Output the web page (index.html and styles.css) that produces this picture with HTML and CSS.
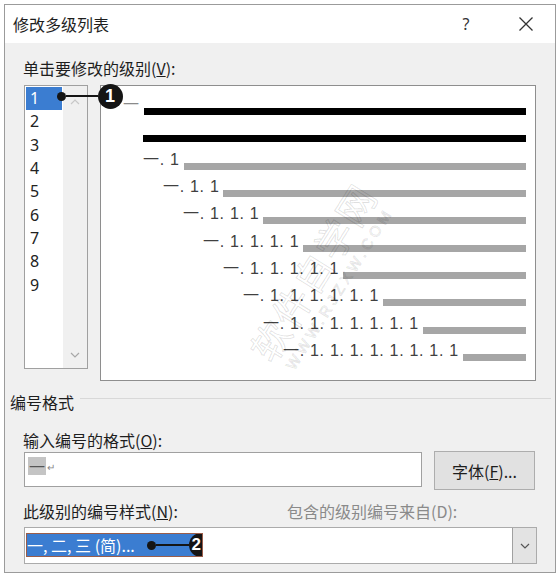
FILE: index.html
```html
<!DOCTYPE html>
<html lang="zh-CN">
<head>
    <meta charset="UTF-8">
    <title>修改多级列表</title>
    <link rel="stylesheet" href="styles.css">
</head>
<body>
    <div class="dialog">
        <div class="titlebar">
            <span class="title">修改多级列表</span>
            <span class="help">?</span>
            <svg class="close" width="14" height="14" viewBox="0 0 14 14">
                <path d="M0.5 0.5 L13.5 13.5 M13.5 0.5 L0.5 13.5" stroke="#333" stroke-width="1.3" fill="none"/>
            </svg>
        </div>

        <div class="content">
            <div class="label level-label">单击要修改的级别(<u>V</u>):</div>

            <div class="top-row">
                <div class="listbox">
                    <ul class="levels">
                        <li class="selected">1</li>
                        <li>2</li>
                        <li>3</li>
                        <li>4</li>
                        <li>5</li>
                        <li>6</li>
                        <li>7</li>
                        <li>8</li>
                        <li>9</li>
                    </ul>
                    <div class="scrollbar">
                        <svg width="10" height="6" viewBox="0 0 10 6"><path d="M1 5 L5 1 L9 5" stroke="#c8c8c8" stroke-width="1.2" fill="none"/></svg>
                        <svg width="10" height="6" viewBox="0 0 10 6"><path d="M1 1 L5 5 L9 1" stroke="#a8a8a8" stroke-width="1.2" fill="none"/></svg>
                    </div>
                </div>

                <div class="preview">
                    <div class="pv-row lv1"><span class="pv-num first">一</span><span class="pv-bar current"></span></div>
                    <div class="pv-row lv2"><span class="pv-bar current"></span></div>
                    <div class="pv-row lv2"><span class="pv-num">一. 1</span><span class="pv-bar"></span></div>
                    <div class="pv-row lv3"><span class="pv-num">一. 1. 1</span><span class="pv-bar"></span></div>
                    <div class="pv-row lv4"><span class="pv-num">一. 1. 1. 1</span><span class="pv-bar"></span></div>
                    <div class="pv-row lv5"><span class="pv-num">一. 1. 1. 1. 1</span><span class="pv-bar"></span></div>
                    <div class="pv-row lv6"><span class="pv-num">一. 1. 1. 1. 1. 1</span><span class="pv-bar"></span></div>
                    <div class="pv-row lv7"><span class="pv-num">一. 1. 1. 1. 1. 1. 1</span><span class="pv-bar"></span></div>
                    <div class="pv-row lv8"><span class="pv-num">一. 1. 1. 1. 1. 1. 1. 1</span><span class="pv-bar"></span></div>
                    <div class="pv-row lv9"><span class="pv-num">一. 1. 1. 1. 1. 1. 1. 1. 1</span><span class="pv-bar"></span></div>
                </div>
            </div>

            <div class="group">
                <span>编号格式</span>
                <span class="group-line"></span>
            </div>

            <div class="label format-label">输入编号的格式(<u>O</u>):</div>
            <div class="format-row">
                <div class="format-input"><span class="num-field">一</span><span class="para-mark">↵</span></div>
                <button class="font-btn">字体(<u>F</u>)...</button>
            </div>

            <div class="style-labels">
                <span class="style-label">此级别的编号样式(<u>N</u>):</span>
                <span class="style-label disabled">包含的级别编号来自(D):</span>
            </div>
            <div class="combo">
                <div class="combo-value">
                    一, 二, 三 (简)...
                    <div class="callout callout-two"><span class="dot"></span><span class="stem"></span><span class="badge">2</span></div>
                </div>
                <div class="combo-arrow">
                    <svg width="10" height="6" viewBox="0 0 10 6"><path d="M1 1 L5 5 L9 1" stroke="#555" stroke-width="1.2" fill="none"/></svg>
                </div>
            </div>
        </div>

        <!-- annotation over the level list -->
        <div class="callout callout-one"><span class="dot"></span><span class="stem"></span><span class="badge">1</span></div>

        <div class="watermark">
            <div class="wm-name">软件自学网</div>
            <div class="wm-url">WWW.RJZXW.COM</div>
        </div>
    </div>
</body>
</html>
```

FILE: styles.css
```css
* {
    box-sizing: border-box;
}

body {
    margin: 0;
    padding: 4px;
    background: #fff;
    font-family: "Noto Sans", "Noto Sans CJK SC", sans-serif;
    font-size: 16px;
    color: #1e1e1e;
}

.dialog {
    position: relative;
    width: 552px;
    border: 1px solid #9b9b9b;
    background: #f0f0f0;
    overflow: hidden;
}

.titlebar {
    height: 38px;
    background: #fff;
    display: flex;
    align-items: center;
    padding-left: 8px;
    padding-right: 22px;
}

.title {
    flex: 1;
    line-height: 20px;
    font-family: "Noto Sans CJK SC", sans-serif;
}

.help {
    width: 20px;
    text-align: center;
    line-height: 20px;
    color: #333;
    margin-right: 43px;
}

.label {
    line-height: 20px;
    font-family: "Noto Sans CJK SC", sans-serif;
}

.level-label {
    margin: 15px 0 0 18px;
}

.top-row {
    display: flex;
    gap: 12px;
    margin-top: 7px;
    padding-left: 19px;
}

.listbox {
    width: 64px;
    height: 284px;
    border: 1px solid #a0a0a0;
    background: #fff;
    display: flex;
}

.levels {
    list-style: none;
    margin: 0;
    padding: 1px;
    width: 38px;
}

.levels li {
    height: 23.33px;
    line-height: 23px;
    padding-left: 4px;
    color: #222;
}

.levels li.selected {
    background: #3b7dd1;
    color: #fff;
}

.scrollbar {
    flex: 1;
    background: #f0f0f0;
    display: flex;
    flex-direction: column;
    justify-content: space-between;
    align-items: center;
    padding: 13px 0 10px;
}

.preview {
    width: 436px;
    height: 296px;
    border: 1px solid #8e8e8e;
    background: #fff;
    padding: 1.67px 9px 0 0;
}

.pv-row {
    display: flex;
    align-items: flex-end;
    height: 27.33px;
}

.lv1 { padding-left: 22px; }
.lv2 { padding-left: 42px; }
.lv3 { padding-left: 62px; }
.lv4 { padding-left: 82px; }
.lv5 { padding-left: 102px; }
.lv6 { padding-left: 122px; }
.lv7 { padding-left: 142px; }
.lv8 { padding-left: 162px; }
.lv9 { padding-left: 182px; }

.pv-num {
    font-family: "Liberation Sans", "Noto Sans CJK SC", sans-serif;
    font-size: 16px;
    line-height: 20px;
    height: 20px;
    letter-spacing: 0.7px;
    color: #404040;
    white-space: nowrap;
    margin-right: 4px;
}

.pv-num.first {
    color: #8a8a8a;
}

.pv-bar {
    flex: 1;
    height: 7px;
    background: #a6a6a6;
}

.pv-bar.current {
    background: #000;
}

.group {
    display: flex;
    margin-top: 11px;
    padding: 0 4px 0 5px;
    line-height: 20px;
    font-family: "Noto Sans CJK SC", sans-serif;
}

.group-line {
    flex: 1;
    height: 1px;
    background: #d8d8d8;
    margin: 6px 0 0 6px;
}

.format-label {
    margin: 18px 0 0 18px;
}

.format-row {
    display: flex;
    align-items: flex-start;
    gap: 12px;
    margin-top: 1px;
    padding-left: 19px;
}

.format-input {
    width: 398px;
    height: 35px;
    margin-top: 1px;
    border: 1px solid #a0a0a0;
    background: #fff;
    padding: 4px 3px 0;
    display: flex;
    align-items: flex-start;
}

.num-field {
    background: #c4c4c4;
    color: #555;
    font-family: "Noto Sans CJK SC", sans-serif;
    line-height: 18px;
    height: 18px;
    padding: 0 1px;
}

.para-mark {
    font-size: 10px;
    line-height: 10px;
    color: #888;
    margin: 5px 0 0 1px;
}

.font-btn {
    width: 101px;
    height: 39px;
    background: #e1e1e1;
    border: 1px solid #adadad;
    font-family: "Noto Sans CJK SC", sans-serif;
    font-size: 16px;
    color: #1e1e1e;
    padding: 0;
}

.style-labels {
    display: flex;
    margin-top: 11px;
    padding-left: 18px;
    line-height: 20px;
    font-family: "Noto Sans CJK SC", sans-serif;
}

.style-label {
    width: 264px;
}

.style-label.disabled {
    color: #8a8a8a;
}

.combo {
    display: flex;
    width: 513px;
    height: 37px;
    margin: 6px 0 8px 19px;
    border: 1px solid #ababab;
    background: #fff;
}

.combo-value {
    position: relative;
    overflow: hidden;
    width: 177px;
    height: 24px;
    margin: 5px 0 0 1px;
    background: #3b7dd1;
    border: 1px solid #9a5d4a;
    color: #fff;
    font-family: "Noto Sans CJK SC", sans-serif;
    line-height: 22px;
    white-space: nowrap;
}

.combo-arrow {
    margin-left: auto;
    width: 24px;
    background: #e3e3e3;
    border-left: 1px solid #a0a0a0;
    display: flex;
    align-items: center;
    justify-content: center;
}

.callout {
    position: absolute;
    display: flex;
    align-items: center;
}

.callout .dot {
    width: 9px;
    height: 9px;
    border-radius: 50%;
    background: #151515;
}

.callout .stem {
    height: 2px;
    background: #151515;
}

.callout .badge {
    border-radius: 50%;
    background: #151515;
    color: #fff;
    font-family: "Liberation Sans", sans-serif;
    font-weight: bold;
    text-align: center;
}

.callout-one {
    left: 51.5px;
    top: 78.5px;
    height: 25px;
}

.callout-one .stem {
    width: 32px;
}

.callout-one .badge {
    width: 25px;
    height: 25px;
    line-height: 25px;
    font-size: 18px;
}

.callout-two {
    left: 119.5px;
    top: 0;
    height: 22px;
}

.callout-two .stem {
    width: 33px;
}

.callout-two .badge {
    flex: none;
    width: 24px;
    height: 24px;
    line-height: 24px;
    font-size: 17px;
    text-align: left;
    padding-left: 3px;
}

.watermark {
    position: absolute;
    left: 206px;
    top: 240px;
    width: 220px;
    height: 64px;
    transform: rotate(-58deg);
    text-align: center;
    pointer-events: none;
    color: transparent;
}

.wm-name {
    font-family: "Noto Sans CJK SC", sans-serif;
    font-size: 38px;
    line-height: 44px;
    letter-spacing: 2px;
    -webkit-text-stroke: 1px rgba(0, 0, 0, 0.12);
}

.wm-url {
    font-family: "Liberation Sans", sans-serif;
    font-size: 15px;
    line-height: 20px;
    letter-spacing: 4px;
    -webkit-text-stroke: 1px rgba(0, 0, 0, 0.1);
}
```
